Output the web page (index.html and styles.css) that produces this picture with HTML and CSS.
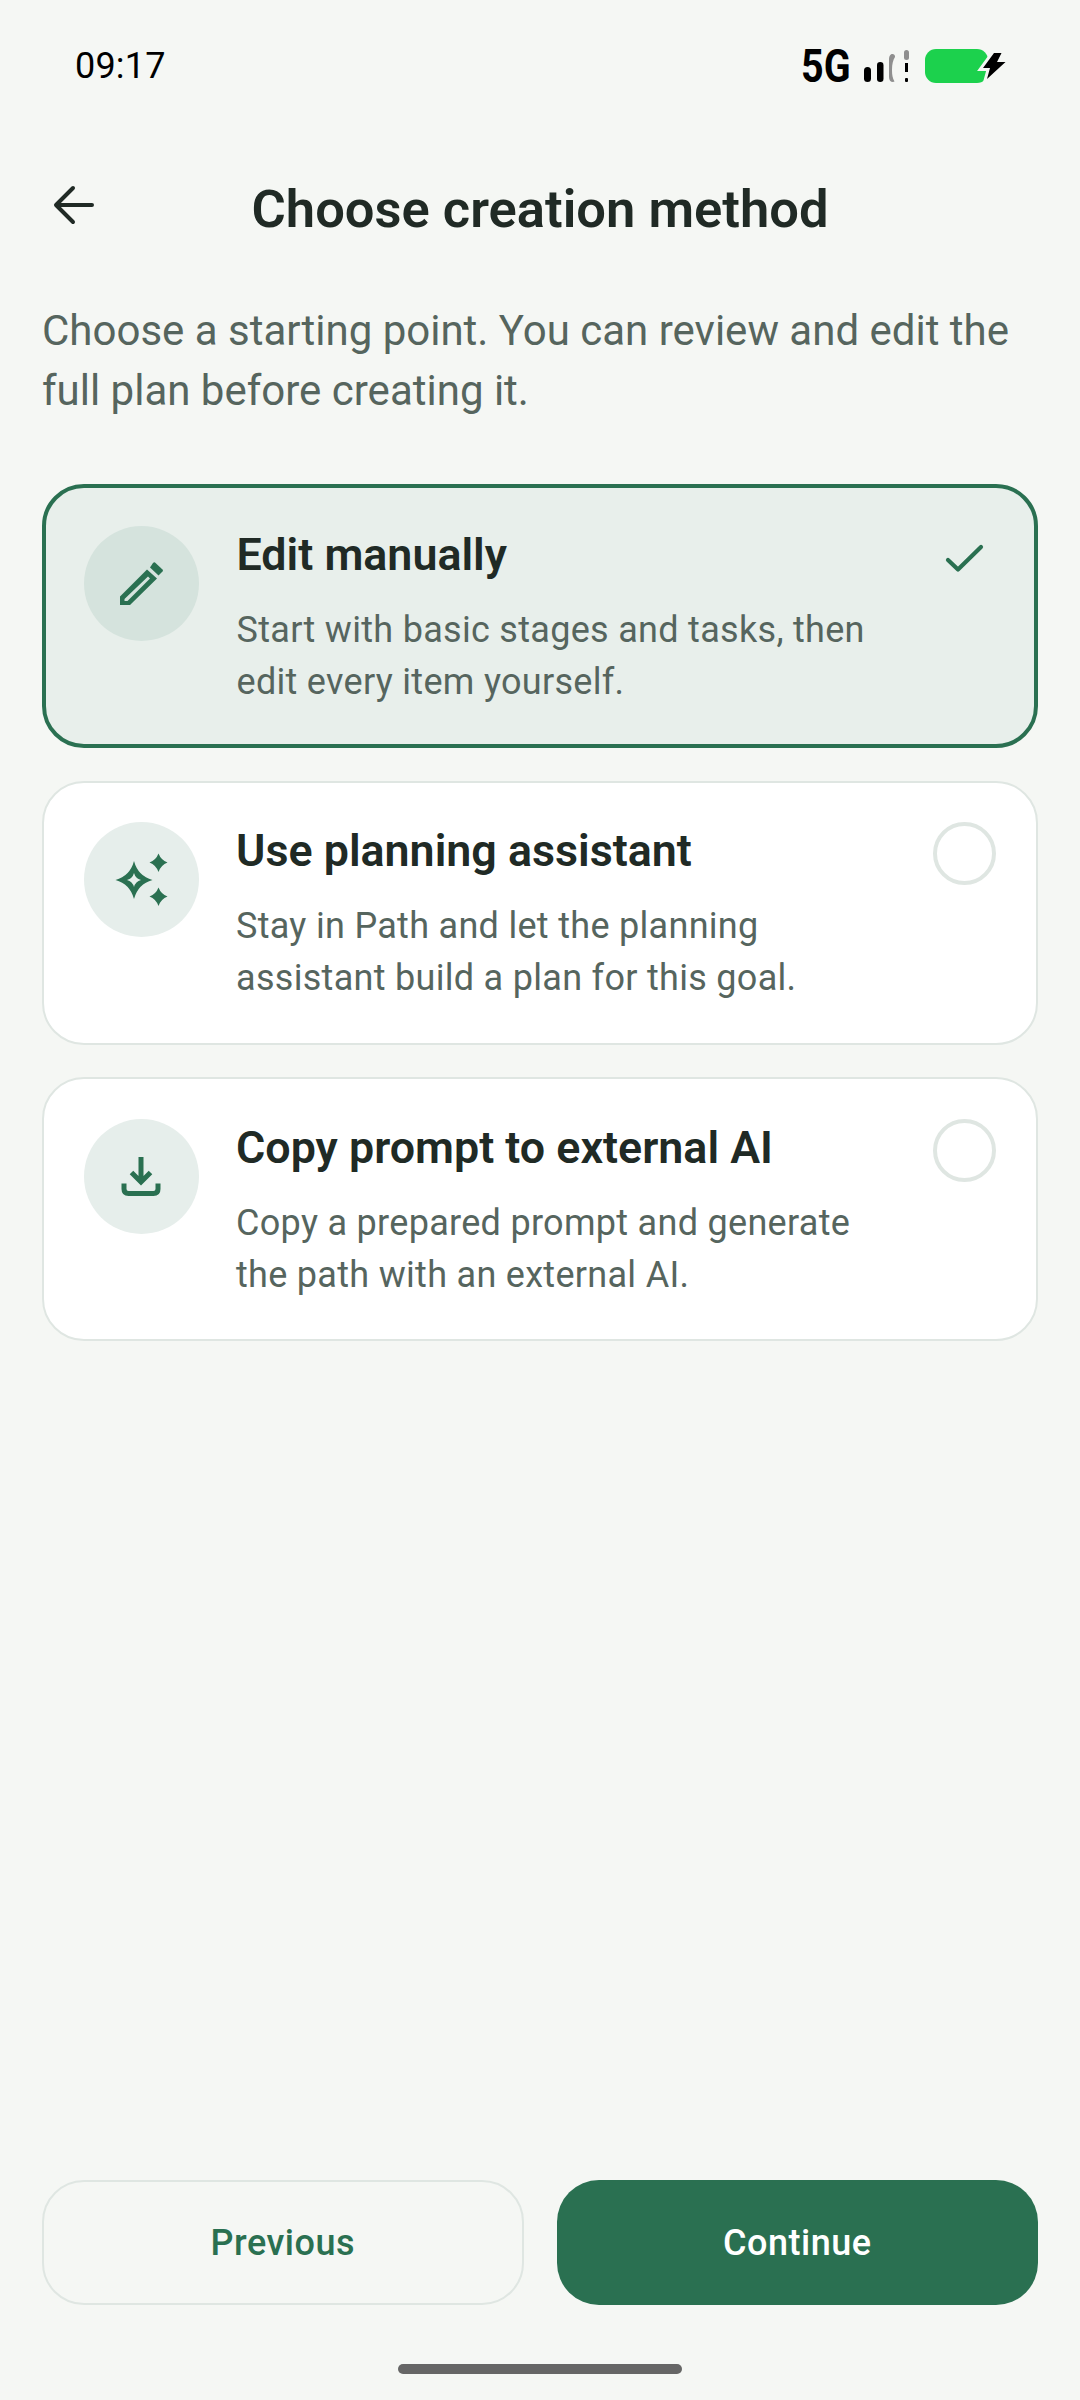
FILE: index.html
```html
<!DOCTYPE html>
<html lang="en">
<head>
<meta charset="utf-8">
<title>Choose creation method</title>
<link rel="stylesheet" href="styles.css">
</head>
<body>
<div class="screen">
  <div class="status">
    <span class="time">09:17</span>
    <div class="status-right">
      <span class="net">5G</span>
      <svg class="signal" width="46" height="32" viewBox="0 0 46 32">
        <rect x="0" y="17" width="7" height="15" rx="3.5" fill="#000"/>
        <rect x="13" y="12" width="6.500" height="20" rx="3.2" fill="#000"/>
        <path d="M28.500 4 C26 4 25 6.500 25 10 V27 C25 30 26.500 32 29 32 L30.500 31.500 C28.500 28 28 25 28 20 C28 14 29 10 31 7 V6.500 C31 5 30 4 28.500 4 Z" fill="#8f8f8f"/>
        <rect x="40" y="0" width="5" height="10" rx="2.500" fill="#8f8f8f"/>
        <rect x="41" y="13" width="3" height="9" fill="#000"/>
        <rect x="41" y="28" width="3" height="4" rx="1" fill="#000"/>
      </svg>
      <svg class="battery" width="81" height="36" viewBox="0 0 81 36">
        <rect x="0" y="1" width="63" height="34" rx="11" fill="#1cd14d"/>
        <path d="M69 5 L58 20 H65 L62 31 L80.500 14 H72 L76.500 5 Z" fill="#000" stroke="#f5f7f4" stroke-width="6" paint-order="stroke" stroke-linejoin="miter"/>
      </svg>
    </div>
  </div>

  <header class="topbar">
    <svg class="back" width="44" height="44" viewBox="0 0 44 44" fill="none" stroke="#202a25" stroke-width="4" stroke-linecap="round" stroke-linejoin="round">
      <path d="M40 22 H5 M21 5 L4 22 L21 39"/>
    </svg>
    <h1 class="heading">Choose creation method</h1>
  </header>

  <p class="intro">Choose a starting point. You can review and edit the full plan before creating it.</p>

  <div class="options">
    <div class="option selected">
      <div class="badge">
        <svg width="48" height="48" viewBox="0 0 48 48">
          <path fill-rule="evenodd" fill="#2a7051" d="M2 36.500 L29 9.500 L39 18.500 L12 45 H2 Z M6.500 39 V41 H9.500 L32 18.500 L30 16.500 Z"/>
          <path fill="#2a7051" d="M37 2.500 L44.500 9.500 Q45.500 10.500 44.500 11.500 L40.500 15.500 L32 7.500 L35 3 Q36 2 37 2.500 Z"/>
        </svg>
      </div>
      <div class="copy">
        <div class="name">Edit manually</div>
        <div class="desc">Start with basic stages and tasks, then edit every item yourself.</div>
      </div>
      <div class="mark">
        <svg width="64" height="64" viewBox="0 0 64 64" fill="none" stroke="#2a7051" stroke-width="4.200" stroke-linecap="round" stroke-linejoin="round">
          <path d="M16 34 L26 43.500 L49 21"/>
        </svg>
      </div>
    </div>

    <div class="option">
      <div class="badge">
        <svg width="64" height="64" viewBox="0 0 64 64">
          <path fill-rule="evenodd" fill="#2a7051" d="M25 13 Q29 28 43.500 32 Q29 36 25 51 Q21 36 6.500 32 Q21 28 25 13 Z M25 25 Q23.500 30.500 18 32 Q23.500 33.500 25 39 Q26.500 33.500 32 32 Q26.500 30.500 25 25 Z"/>
          <path fill="#2a7051" d="M49.500 5.500 Q52 12 58.500 14.500 Q52 17 49.500 24 Q47 17 40.500 14.500 Q47 12 49.500 5.500 Z"/>
          <path fill="#2a7051" d="M49.500 39.500 Q52 46 58.500 48.500 Q52 51 49.500 58 Q47 51 40.500 48.500 Q47 46 49.500 39.500 Z"/>
        </svg>
      </div>
      <div class="copy">
        <div class="name">Use planning assistant</div>
        <div class="desc">Stay in Path and let the planning assistant build a plan for this goal.</div>
      </div>
      <div class="mark"><span class="radio"></span></div>
    </div>

    <div class="option">
      <div class="badge">
        <svg width="48" height="48" viewBox="0 0 48 48" fill="none" stroke="#2a7051" stroke-width="5">
          <path d="M24 5 V31 M14.500 20.500 L24 30 L33.500 20.500"/>
          <path d="M7 31.500 V37 Q7 41.500 11.500 41.500 H36.500 Q41 41.500 41 37 V31.500"/>
        </svg>
      </div>
      <div class="copy">
        <div class="name">Copy prompt to external AI</div>
        <div class="desc">Copy a prepared prompt and generate the path with an external AI.</div>
      </div>
      <div class="mark"><span class="radio"></span></div>
    </div>
  </div>

  <div class="actions">
    <button class="btn secondary">Previous</button>
    <button class="btn primary">Continue</button>
  </div>
  <div class="home-wrap"><div class="home"></div></div>
</div>
</body>
</html>
```

FILE: styles.css
```css
* { box-sizing: border-box; }
html, body { margin: 0; padding: 0; }
body { background: #f5f7f4; font-family: Roboto, "Liberation Sans", sans-serif; }
.screen { width: 1080px; height: 2400px; display: flex; flex-direction: column; padding: 0 42px; }

.status { height: 170px; display: flex; justify-content: space-between; align-items: flex-start; padding: 45px 0 0 33px; }
.time { font-size: 36px; line-height: 42px; color: #000; letter-spacing: 0.2px; }
.status-right { display: flex; align-items: center; height: 42px; margin-right: 32px; }
.net { font-size: 47px; line-height: 42px; font-weight: 700; color: #000; transform: scaleX(0.84); transform-origin: left center; width: 63px; margin-left: -3px; }
.signal { margin-left: 0; }
.battery { margin-left: 15px; }

.topbar { height: 78px; display: flex; align-items: center; position: relative; justify-content: center; }
.back { position: absolute; left: 10px; top: 13px; }
.heading { margin: 0; font-size: 52.500px; font-weight: 600; color: #202a25; line-height: 78px; }

.intro { margin: 53px 0 0; font-size: 42px; line-height: 60px; color: #56655e; }

.options { display: flex; flex-direction: column; gap: 32.500px; margin-top: 63px; }
.option { height: 264px; border-radius: 42px; background: #fff; border: 2.500px solid #dfe6e2; padding: 39.500px 39.500px 0; display: flex; gap: 37.500px; }
.option.selected { background: #e8efeb; border: 4px solid #2a7051; padding: 38px 38px 0; }
.badge { width: 115px; height: 115px; border-radius: 50%; background: #e6eeeb; display: flex; align-items: center; justify-content: center; flex: none; }
.selected .badge { background: #d5e3dd; }
.copy { flex: 1; min-width: 0; }
.name { font-size: 44.800px; line-height: 54px; font-weight: 600; color: #202a25; margin-top: 2px; }
.desc { font-size: 36px; line-height: 52px; letter-spacing: 0.3px; color: #56655e; margin-top: 22px; }
.mark { width: 64px; flex: none; display: flex; justify-content: center; }
.radio { width: 63px; height: 63px; border-radius: 50%; border: 4px solid #dfe6e2; }

.actions { margin-top: auto; display: grid; grid-template-columns: 1fr 1fr; gap: 33px; }
.btn { height: 125px; border-radius: 42px; font-family: inherit; font-size: 36px; font-weight: 500; letter-spacing: 0.5px; padding: 0; }
.secondary { background: transparent; border: 2.500px solid #dfe6e2; color: #2a7051; }
.primary { background: #2a7051; border: 0; color: #fff; }

.home-wrap { height: 95px; padding-top: 59px; display: flex; justify-content: center; }
.home { width: 284px; height: 10px; border-radius: 5px; background: #666; }
```
